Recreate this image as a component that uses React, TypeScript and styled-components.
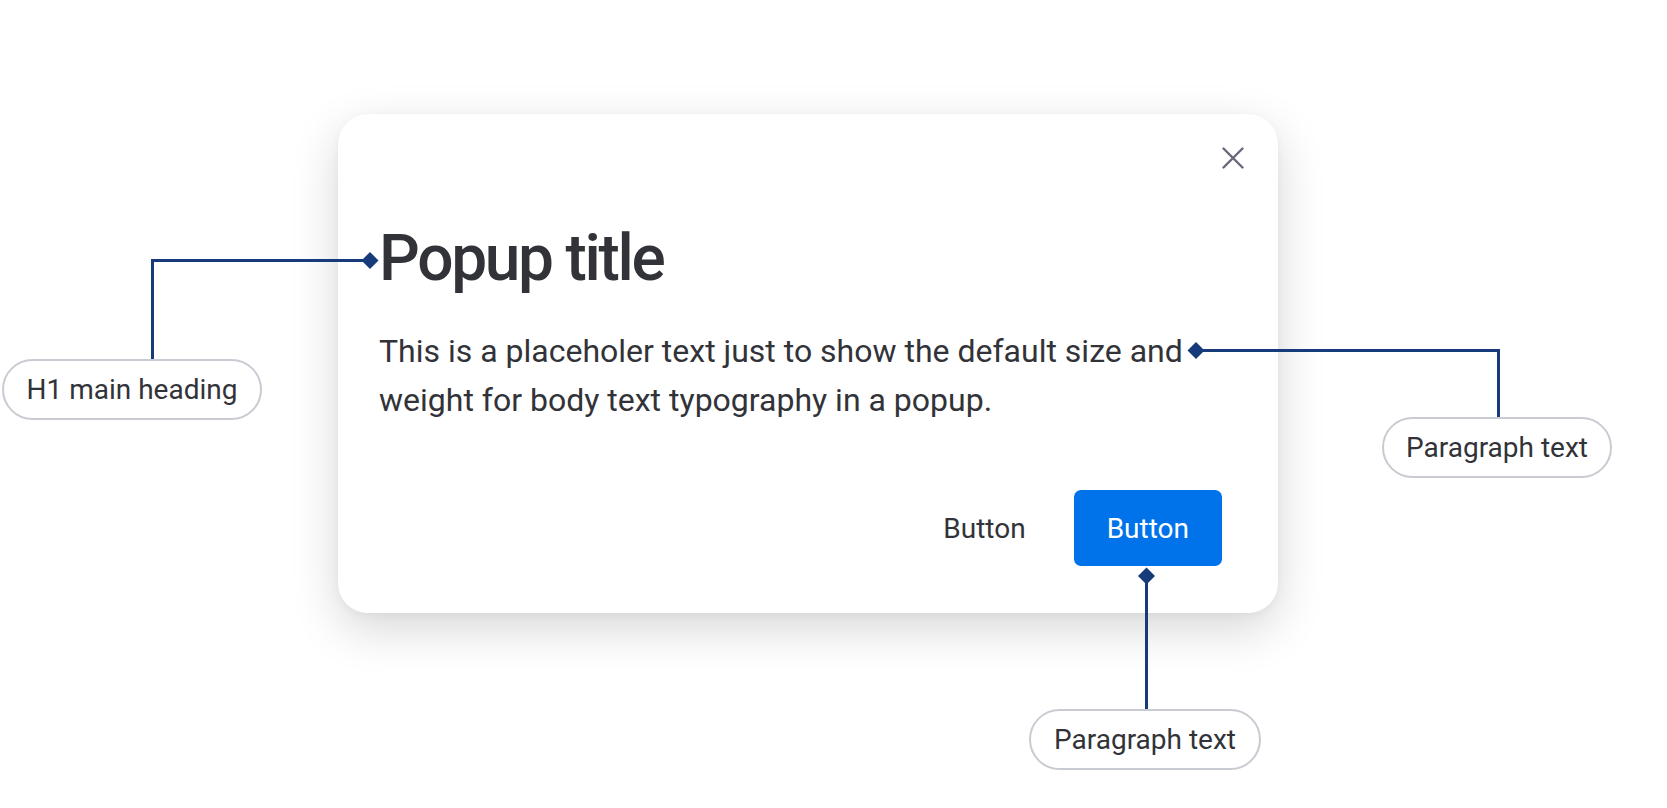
import React from "react";
import styled, { createGlobalStyle } from "styled-components";

const GlobalStyle = createGlobalStyle`
  html, body { margin: 0; padding: 0; background: #ffffff; }
  body { font-family: Roboto, "Noto Sans", "Liberation Sans", sans-serif; color: #323338; }
  * { box-sizing: border-box; }
`;

const Stage = styled.div`
  position: relative;
  width: 1667px;
  height: 808px;
  overflow: hidden;
  padding-top: 114px;
  padding-left: 338px;
`;

const Popup = styled.div`
  width: 940px;
  height: 499px;
  background: #ffffff;
  border-radius: 30px;
  box-shadow: 0 16px 48px rgba(0, 0, 0, 0.16), 0 2px 10px rgba(0, 0, 0, 0.04);
  display: flex;
  flex-direction: column;
`;

const CloseRow = styled.div`
  display: flex;
  justify-content: flex-end;
  padding: 33px 34px 0 0;
`;

const CloseButton = styled.button`
  width: 22px;
  height: 22px;
  padding: 0;
  border: none;
  background: transparent;
  display: flex;
  align-items: center;
  justify-content: center;
  cursor: pointer;
`;

const Body = styled.div`
  padding: 0 56px 0 41px;
  display: flex;
  flex-direction: column;
`;

const Title = styled.h1`
  margin: 52px 0 0;
  font-size: 64px;
  line-height: 76px;
  font-weight: 500;
  letter-spacing: -2.3px;
  color: #323338;
`;

const Paragraph = styled.p`
  margin: 30px 0 0;
  font-size: 32px;
  line-height: 49px;
  font-weight: 400;
  color: #323338;
`;

const Footer = styled.div`
  margin-top: 65px;
  display: flex;
  justify-content: flex-end;
  align-items: center;
  gap: 24px;
`;

const Button = styled.button<{ $primary?: boolean }>`
  height: 76px;
  padding: ${(p) => (p.$primary ? "0 33px" : "0 24px")};
  border: none;
  border-radius: 7px;
  font-family: Roboto, "Noto Sans", sans-serif;
  font-size: 28px;
  font-weight: 400;
  background: ${(p) => (p.$primary ? "#0073ea" : "transparent")};
  color: ${(p) => (p.$primary ? "#ffffff" : "#323338")};
  cursor: pointer;
`;

const Overlay = styled.svg`
  position: absolute;
  left: 0;
  top: 0;
  pointer-events: none;
`;

const Pill = styled.div<{ $x: number; $y: number; $w: number }>`
  position: absolute;
  left: ${(p) => p.$x}px;
  top: ${(p) => p.$y}px;
  width: ${(p) => p.$w}px;
  height: 61px;
  border: 2px solid #c9cbd3;
  border-radius: 31px;
  background: #ffffff;
  display: flex;
  align-items: center;
  justify-content: center;
  font-size: 28px;
  color: #323338;
  white-space: nowrap;
`;

const LINE = "#163a7a";

const Diamond = ({ x, y }: { x: number; y: number }) => (
  <polygon points={`${x},${y - 8.5} ${x + 8.5},${y} ${x},${y + 8.5} ${x - 8.5},${y}`} fill={LINE} />
);

export default function App() {
  return (
    <>
      <GlobalStyle />
      <Stage>
        <Popup>
          <CloseRow>
            <CloseButton aria-label="Close">
              <svg width="22" height="22" viewBox="0 0 22 22">
                <path d="M1.5 1.5 L20.5 20.5 M20.5 1.5 L1.5 20.5" stroke="#676879" strokeWidth="2.4" strokeLinecap="round" />
              </svg>
            </CloseButton>
          </CloseRow>
          <Body>
            <Title>Popup title</Title>
            <Paragraph>
              This is a placeholer text just to show the default size and weight for body text typography in a popup.
            </Paragraph>
            <Footer>
              <Button>Button</Button>
              <Button $primary>Button</Button>
            </Footer>
          </Body>
        </Popup>

        <Overlay width="1667" height="808" viewBox="0 0 1667 808">
          <polyline points="152.5,359 152.5,260.5 368,260.5" fill="none" stroke={LINE} strokeWidth="3" />
          <Diamond x={370} y={260.5} />
          <polyline points="1196,350.5 1498.5,350.5 1498.5,417" fill="none" stroke={LINE} strokeWidth="3" />
          <Diamond x={1196} y={350.5} />
          <polyline points="1146.5,576 1146.5,709" fill="none" stroke={LINE} strokeWidth="3" />
          <Diamond x={1146.5} y={576} />
        </Overlay>

        <Pill $x={2} $y={359} $w={260}>H1 main heading</Pill>
        <Pill $x={1382} $y={417} $w={230}>Paragraph text</Pill>
        <Pill $x={1029} $y={709} $w={232}>Paragraph text</Pill>
      </Stage>
    </>
  );
}
